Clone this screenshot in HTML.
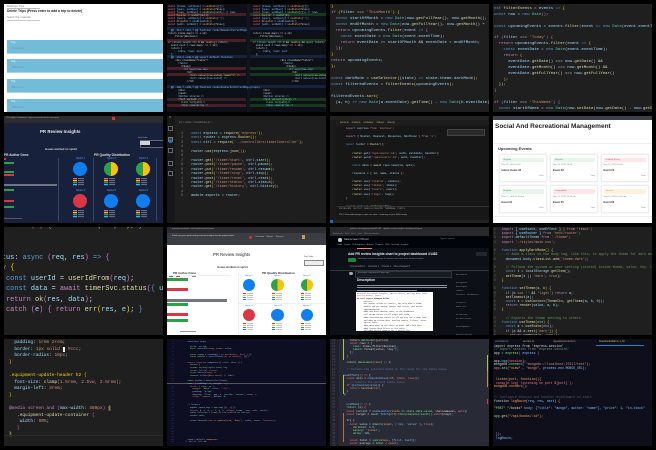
<!DOCTYPE html>
<html><head><meta charset="utf-8"><title>Screenshots</title>
<style>
html,body{margin:0;padding:0;background:#000;width:656px;height:450px;overflow:hidden}
.t{position:absolute;overflow:hidden;width:159px;height:108px}
.p{position:absolute;margin:0;white-space:pre;font-family:"Liberation Mono",monospace;filter:blur(.25px)}
.a{position:absolute}
.n{font-family:"Liberation Sans",sans-serif;white-space:nowrap;position:absolute}
i{font-style:normal}
.k{color:#c586c0}.b{color:#569cd6}.f{color:#dcdcaa}.v{color:#9cdcfe}.s{color:#ce9178}.y{color:#ffd700}.g{color:#6a9955}.w{color:#d4d4d4}.e{color:#4ec9b0}.m{color:#da70d6}.r{color:#f97583}.h{color:#7ee787}.l{color:#79c0ff}.o{color:#ffa657}
.pie{position:absolute;border-radius:50%}
</style></head><body>

<!-- r1c1 -->
<div class="t" style="left:4px;top:4px;background:#fff">
<div class="n" style="left:3px;top:1px;font-size:2.4px;color:#777">Bookings / Trips</div>
<div class="a" style="left:3px;top:4px;width:33px;height:.6px;background:#bbb"></div>
<div class="n" style="left:3px;top:5px;font-size:3.35px;font-weight:bold;color:#222">Delete Trips (Press enter to add a trip to delete)</div>
<div class="n" style="left:3px;top:12px;font-size:2.4px;color:#777">Search Trip / Calendar</div>
<div class="a" style="left:3px;top:15.5px;width:33px;height:.7px;background:#ccc"></div>
<div class="a" style="left:3px;top:36px;width:156px;height:13px;background:#72bcd9;border-bottom:1px solid #a9d5e6"><div class="n" style="left:4px;top:1px;font-size:2.6px;color:#fff">Trip</div><div class="n" style="left:5px;top:7px;font-size:2.6px;color:#7d8f98">Bike route</div></div>
<div class="a" style="left:3px;top:55px;width:156px;height:13px;background:#72bcd9;border-bottom:1px solid #a9d5e6"><div class="n" style="left:4px;top:1px;font-size:2.6px;color:#fff">Trip</div><div class="n" style="left:5px;top:7px;font-size:2.6px;color:#7d8f98">Bike route</div></div>
<div class="a" style="left:3px;top:75px;width:156px;height:13px;background:#72bcd9;border-bottom:1px solid #a9d5e6"><div class="n" style="left:4px;top:1px;font-size:2.6px;color:#fff">Trip</div><div class="n" style="left:5px;top:7px;font-size:2.6px;color:#7d8f98">Bike route</div></div>
<div class="a" style="left:3px;top:95px;width:156px;height:13px;background:#72bcd9"><div class="n" style="left:4px;top:1px;font-size:2.6px;color:#fff">Trip</div><div class="n" style="left:5px;top:7px;font-size:2.6px;color:#7d8f98">Bike route</div></div>
</div>

<!-- r1c2 diff -->
<div class="t" style="left:167px;top:4px;background:#0d1117">
<div class="a" style="left:0;top:9.2px;width:79px;height:3px;background:#4a1f24"></div><div class="a" style="left:83px;top:9.2px;width:76px;height:3px;background:#17381f"></div>
<div class="a" style="left:0;top:23px;width:159px;height:3px;background:#16233b"></div>
<div class="a" style="left:0;top:35.2px;width:79px;height:3px;background:#4a1f24"></div><div class="a" style="left:83px;top:35.2px;width:76px;height:3px;background:#17381f"></div>
<div class="a" style="left:0;top:51px;width:159px;height:3px;background:#16233b"></div>
<div class="a" style="left:0;top:62.8px;width:79px;height:3px;background:#4a1f24"></div><div class="a" style="left:83px;top:62.8px;width:76px;height:3px;background:#17381f"></div>
<div class="a" style="left:0;top:69.2px;width:79px;height:3px;background:#4a1f24"></div><div class="a" style="left:83px;top:69.2px;width:76px;height:3px;background:#17381f"></div>
<div class="a" style="left:0;top:80.5px;width:159px;height:3px;background:#16233b"></div>
<div class="a" style="left:0;top:93.5px;width:79px;height:3px;background:#3a2024"></div><div class="a" style="left:83px;top:93.5px;width:76px;height:3px;background:#17381f"></div>
<div class="a" style="left:0;top:99.5px;width:79px;height:3px;background:#4a1f24"></div><div class="a" style="left:83px;top:99.5px;width:76px;height:3px;background:#17381f"></div>
<div class="a" style="left:80px;top:0;width:3px;height:108px;background:#11161d"></div>
<pre class="p" style="left:1px;top:.5px;font-size:2.4px;line-height:3px;color:#c9d1d9"><i class="r">const</i> <i class="l">[items, setItems]</i> = <i class="o">useState</i>([]);
<i class="r">const</i> <i class="l">[open, setOpen]</i> = <i class="o">useState</i>(false);
<i class="r">const</i> <i class="l">[rows, setRows]</i> = <i class="h">useState</i>(null); <i class="l">// rows</i>
<i class="r">const</i> <i class="o">handler</i> = <i class="h">useRef</i>(null);
<i class="r">const</i> <i class="l">[query, setQuery]</i> = <i class="o">useState</i>('');
<i class="r">const</i> <i class="o">dispatch</i> = <i class="l">useDispatch</i>();
<i class="r">const</i> <i class="l">[edit, setEdit]</i> = <i class="o">useState</i>(false);

  <i class="l">@@ -112,7 +112,7 @@ function renderRowsForCurrentPage</i>
<i class="w">return items.map(i =&gt; i.id)</i>
<i class="w">    .filter(Boolean);</i>

<i class="r">if</i> (<i class="l">items.length</i> === 0 &amp;&amp; <i class="o">loading</i>) return;
  <i class="w">const next = rows.map(r =&gt; r.id);</i>
<i class="w">  return {</i>
<i class="l">    ...state, rows: next</i>
<i class="w">  };</i>
  <i class="l">@@ -140,9 +140,9 @@ export default function</i>
     <i class="w">&lt;div className="table"&gt;</i>
       <i class="l">&lt;Table&gt;</i>
         <i class="w">&lt;tbody&gt;</i>
           <i class="l">&lt;tr key={row.id}&gt;</i>
             <i class="w">&lt;td&gt;</i>
               <i class="h">&lt;Cell value={row.value} name="x" /&gt;</i>
               <i class="l">&lt;Cell value={row.total} /&gt;</i>
             <i class="w">&lt;/td&gt;</i>
  
  <i class="l">@@ -180,7 +180,7 @@ function renderFooterForCurrentPage(props)</i>
       <i class="w">&lt;div&gt;</i>
       <i class="w">&lt;span&gt;</i>
       <i class="l">&lt;Button size=sm /&gt;</i>
       <i class="w">&lt;Text variant /&gt;</i>
         <i class="h">&lt;Link to={path}/&gt;</i>
         <i class="l">&lt;Icon name=arrow /&gt;</i>
</pre>
<pre class="p" style="left:86px;top:.5px;font-size:2.4px;line-height:3px;color:#c9d1d9"><i class="r">const</i> <i class="l">[items, setItems]</i> = <i class="o">useState</i>([]);
<i class="r">const</i> <i class="l">[open, setOpen]</i> = <i class="o">useState</i>(false);
<i class="r">const</i> <i class="l">[rows, setRows]</i> = <i class="h">useState</i>([]); <i class="l">// rows</i>
<i class="r">const</i> <i class="o">handler</i> = <i class="h">useRef</i>(0);
<i class="r">const</i> <i class="l">[query, setQuery]</i> = <i class="o">useState</i>('');
<i class="r">const</i> <i class="o">dispatch</i> = <i class="l">useDispatch</i>();
<i class="r">const</i> <i class="l">[edit, setEdit]</i> = <i class="o">useState</i>(false);


<i class="w">return items.map(i =&gt; i.id)</i>
<i class="w">    .filter(Boolean);</i>

<i class="r">if</i> (<i class="l">items.length</i> === 0 &amp;&amp; <i class="o">loading</i> &amp;&amp; <i class="h">open</i>) return;
  <i class="w">const next = rows.map(r =&gt; r.id);</i>
<i class="w">  return {</i>
<i class="l">    ...state, rows: next</i>
<i class="w">  };</i>

                   <i class="w">&lt;div className="table"&gt;</i>
                     <i class="l">&lt;Table&gt;</i>
                       <i class="w">&lt;tbody&gt;</i>
                         <i class="l">&lt;tr key={row.id}&gt;</i>
                           <i class="w">&lt;td&gt;</i>
                             <i class="h">&lt;Cell value={row.value} name /&gt;</i>
                             <i class="l">&lt;Cell value={row.total} /&gt;</i>
                           <i class="w">&lt;/td&gt;</i>


       <i class="w">&lt;div&gt;</i>
       <i class="w">&lt;span&gt;</i>
       <i class="l">&lt;Button size=sm /&gt;</i>
       <i class="h">&lt;Text variant={kind} /&gt;</i>
         <i class="h">&lt;Link to={path}/&gt;</i>
         <i class="l">&lt;Icon name=arrow /&gt;</i>
</pre>
</div>

<!-- r1c3 -->
<div class="t" style="left:330px;top:4px;background:#1f1f1f">
<pre class="p" style="left:1px;top:-.3px;font-size:3.95px;line-height:6px;color:#d4d4d4"><i class="y">}</i>
<i class="k">if</i> <i class="y">(</i><i class="v">filter</i> === <i class="s">'ThisMonth'</i><i class="y">) {</i>
  <i class="b">const</i> <i class="v">startOfMonth</i> = <i class="b">new</i> <i class="e">Date</i><i class="m">(</i><i class="v">now</i>.<i class="f">getFullYear</i>(), <i class="v">now</i>.<i class="f">getMonth</i>(), 1);
  <i class="b">const</i> <i class="v">endOfMonth</i> = <i class="b">new</i> <i class="e">Date</i><i class="m">(</i><i class="v">now</i>.<i class="f">getFullYear</i>(), <i class="v">now</i>.<i class="f">getMonth</i>() +
  <i class="k">return</i> <i class="v">upcomingEvents</i>.<i class="f">filter</i><i class="m">(</i><i class="v">event</i> <i class="b">=&gt;</i> <i class="m">{</i>
    <i class="b">const</i> <i class="v">eventDate</i> = <i class="b">new</i> <i class="e">Date</i>(<i class="v">event</i>.<i class="v">eventTime</i>);
    <i class="k">return</i> <i class="v">eventDate</i> &gt;= <i class="v">startOfMonth</i> &amp;&amp; <i class="v">eventDate</i> &lt; <i class="v">endOfMonth</i>;
  <i class="m">}</i>);
<i class="y">}</i>
<i class="k">return</i> <i class="v">upcomingEvents</i>;
<i class="y">}</i>;

<i class="b">const</i> <i class="v">darkMode</i> = <i class="f">useSelector</i><i class="y">(</i>(<i class="v">state</i>) <i class="b">=&gt;</i> <i class="v">state</i>.<i class="v">theme</i>.<i class="v">darkMode</i><i class="y">)</i>;
<i class="b">const</i> <i class="v">filteredEvents</i> = <i class="f">filterEvents</i><i class="y">(</i><i class="v">upcomingEvents</i><i class="y">)</i>;

<i class="v">filteredEvents</i>.<i class="f">sort</i><i class="y">(</i>
  (<i class="v">a</i>, <i class="v">b</i>) <i class="b">=&gt;</i> <i class="b">new</i> <i class="e">Date</i>(<i class="v">a</i>.<i class="v">eventDate</i>).<i class="f">getTime</i>() - <i class="b">new</i> <i class="e">Date</i>(<i class="v">b</i>.<i class="v">eventDate</i>).<i class="f">ge</i>
</pre>
</div>

<!-- r1c4 -->
<div class="t" style="left:493px;top:4px;background:#1f1f1f">
<pre class="p" style="left:1px;top:3px;font-size:3.95px;line-height:5.87px;color:#d4d4d4"><i class="b">nst</i> <i class="f">filterEvents</i> = <i class="v">events</i> <i class="b">=&gt;</i> <i class="y">{</i>
<i class="b">const</i> <i class="v">now</i> = <i class="b">new</i> <i class="e">Date</i><i class="m">()</i>;

<i class="b">const</i> <i class="v">upcomingEvents</i> = <i class="v">events</i>.<i class="f">filter</i><i class="m">(</i><i class="v">event</i> <i class="b">=&gt;</i> <i class="b">new</i> <i class="e">Date</i>(<i class="v">event</i>.<i class="v">eventTi</i>

<i class="k">if</i> <i class="m">(</i><i class="v">filter</i> === <i class="s">'Today'</i><i class="m">) {</i>
  <i class="k">return</i> <i class="v">upcomingEvents</i>.<i class="f">filter</i>(<i class="v">event</i> <i class="b">=&gt;</i> <i class="y">{</i>
    <i class="b">const</i> <i class="v">eventDate</i> = <i class="b">new</i> <i class="e">Date</i>(<i class="v">event</i>.<i class="v">eventTime</i>);
    <i class="k">return</i> <i class="y">(</i>
      <i class="v">eventDate</i>.<i class="f">getDate</i>() === <i class="v">now</i>.<i class="f">getDate</i>() &amp;&amp;
      <i class="v">eventDate</i>.<i class="f">getMonth</i>() === <i class="v">now</i>.<i class="f">getMonth</i>() &amp;&amp;
      <i class="v">eventDate</i>.<i class="f">getFullYear</i>() === <i class="v">now</i>.<i class="f">getFullYear</i>()
    <i class="y">)</i>;
  <i class="y">}</i>);
<i class="m">}</i>

<i class="k">if</i> <i class="m">(</i><i class="v">filter</i> === <i class="s">'ThisWeek'</i><i class="m">) {</i>
  <i class="b">const</i> <i class="v">startOfWeek</i> = <i class="b">new</i> <i class="e">Date</i>(<i class="v">now</i>.<i class="f">setDate</i>(<i class="v">now</i>.<i class="f">getDate</i>() - <i class="v">now</i>.<i class="f">getDa</i>
  <i class="b">const</i> <i class="v">endOfWeek</i> = <i class="b">new</i> <i class="e">Date</i>(<i class="v">startOfWeek</i>);
</pre>
</div>

<!-- r2c1 dashboard dark -->
<div class="t" style="left:4px;top:116px;background:#17213b;height:107px">
<div class="a" style="left:0;top:0;width:159px;height:7px;background:#2c2c30"></div>
<div class="n" style="left:2px;top:.5px;font-size:2px;color:#aaa">PR Insights Dashboard - report overview from the last sprint</div>
<div class="a" style="left:108px;top:1px;width:3px;height:3px;background:#d33"></div>
<div class="n" style="left:36px;top:13px;font-size:4.4px;font-weight:bold;color:#e8e8e8">PR Review Insights</div>
<div class="n" style="left:134px;top:21px;font-size:2px;color:#bbb">Sort Order</div>
<div class="a" style="left:136px;top:24px;width:22px;height:6px;background:#111a30;border:.5px solid #667"></div>
<div class="a" style="left:136px;top:25px;width:10px;height:3.5px;background:#cfd3da"></div>
<div class="n" style="left:41px;top:31px;font-size:2.8px;font-weight:bold;color:#ddd">Issues worked on sprint</div>
<div class="n" style="left:0;top:37px;font-size:3.2px;font-weight:bold;color:#ddd">PR Author Done</div>
<div class="n" style="left:90px;top:37px;font-size:3.3px;font-weight:bold;color:#ddd">PR Quality Distribution</div>
<div class="a" style="left:54px;top:42px;width:.7px;height:63px;background:#3a4565"></div>
<div class="a" style="left:89px;top:42px;width:.7px;height:63px;background:#3a4565"></div>
<div class="a" style="left:152px;top:42px;width:.7px;height:63px;background:#3a4565"></div>
<div class="a" style="left:0;top:42px;width:2px;height:2px;background:#d33"></div>
<div class="a" style="left:0;top:45.8px;width:10px;height:2.4px;background:#2ba24a"></div>
<div class="a" style="left:0;top:54.8px;width:10px;height:2.4px;background:#2ba24a"></div>
<div class="a" style="left:0;top:57.5px;width:10px;height:2.4px;background:#dc3545"></div>
<div class="a" style="left:0;top:68px;width:53px;height:2.4px;background:#70757f"></div>
<div class="a" style="left:0;top:72.5px;width:10px;height:2.4px;background:#2ba24a"></div>
<div class="a" style="left:0;top:83.5px;width:10px;height:2.4px;background:#dc3545"></div>
<div class="a" style="left:0;top:89.8px;width:10px;height:2.4px;background:#2ba24a"></div>
<div class="a" style="left:0;top:102px;width:18px;height:1px;background:#556"></div>
<div class="n" style="left:72px;top:41px;font-size:2.6px;color:#5aa0ff">Sprint 1</div>
<div class="n" style="left:103px;top:41px;font-size:2.6px;color:#5aa0ff">Sprint 2</div>
<div class="n" style="left:135px;top:41px;font-size:2.6px;color:#5aa0ff">Sprint 3</div>
<div class="n" style="left:72px;top:73px;font-size:2.6px;color:#5aa0ff">Sprint 4</div>
<div class="n" style="left:103px;top:73px;font-size:2.6px;color:#5aa0ff">Sprint 5</div>
<div class="n" style="left:135px;top:73px;font-size:2.6px;color:#5aa0ff">Sprint 6</div>
<div class="pie" style="left:69px;top:46.3px;width:14px;height:14px;background:#0d7ff0"></div>
<div class="pie" style="left:100px;top:46.3px;width:14px;height:14px;background:linear-gradient(90deg,#2ba24a 50%,#ffc107 50%)"></div>
<div class="pie" style="left:132px;top:46.3px;width:14px;height:14px;background:linear-gradient(90deg,#2ba24a 50%,#ffc107 50%)"></div>
<div class="pie" style="left:69px;top:78.3px;width:14px;height:14px;background:#dc3545"></div>
<div class="pie" style="left:100px;top:78.3px;width:14px;height:14px;background:#0d7ff0"></div>
<div class="pie" style="left:132px;top:78.3px;width:14px;height:14px;background:#0d7ff0"></div>
<svg class="a" style="left:0;top:0" width="159" height="107">
<g id="lg"><rect x="69" y="62" width="4" height="1.3" fill="#e0697a"/><rect x="69" y="64" width="4" height="1.3" fill="#ffc107"/><rect x="69" y="66" width="4" height="1.3" fill="#2ba24a"/><rect x="69" y="68" width="4" height="1.3" fill="#5aa0ff"/><rect x="74" y="62.3" width="6" height=".8" fill="#889"/><rect x="74" y="64.3" width="6" height=".8" fill="#889"/><rect x="74" y="66.3" width="6" height=".8" fill="#889"/><rect x="74" y="68.3" width="6" height=".8" fill="#889"/></g>
<use href="#lg" x="31"/><use href="#lg" x="63"/><use href="#lg" y="32"/><use href="#lg" x="31" y="32"/><use href="#lg" x="63" y="32"/>
</svg>
</div>

<!-- r2c2 -->
<div class="t" style="left:167px;top:116px;background:#1e1e1e;height:107px">
<div class="a" style="left:0;top:0;width:8px;height:107px;background:#181818"></div>
<div class="a" style="left:1.5px;top:0;width:2.5px;height:2px;background:#444"></div>
<div class="a" style="left:1px;top:10px;width:2.5px;height:2.5px;border:.4px solid #666"></div>
<div class="a" style="left:1px;top:21px;width:2.5px;height:2.5px;background:#444;border:.4px solid #777"></div>
<div class="a" style="left:1.5px;top:24px;width:3px;height:3px;background:#0d6fd0"></div>
<div class="a" style="left:1px;top:32px;width:2.5px;height:2.5px;border:.4px solid #666"></div>
<div class="a" style="left:1px;top:45px;width:2.5px;height:2.5px;border:.4px solid #666"></div>
<div class="a" style="left:1px;top:55px;width:2.5px;height:2.5px;border:.4px solid #666"></div>
<div class="n" style="left:12px;top:5px;font-size:2.4px;color:#888">src &gt; routes &gt; timerRoutes.js &gt; ...</div>
<pre class="p" style="left:14px;top:16px;font-size:3.4px;line-height:4.46px;color:#d4d4d4"><i style="color:#858585">1</i>    <i class="b">const</i> <i class="v">express</i> = <i class="f">require</i><i class="y">(</i><i class="s">'express'</i><i class="y">)</i>;
<i style="color:#858585">2</i>    <i class="b">const</i> <i class="v">router</i> = <i class="v">express</i>.<i class="f">Router</i><i class="y">()</i>;
<i style="color:#858585">3</i>    <i class="b">const</i> <i class="v">ctrl</i> = <i class="f">require</i><i class="y">(</i><i class="s">'../controllers/timerController'</i><i class="y">)</i>;
<i style="color:#858585">4</i>
<i style="color:#858585">5</i>    <i class="v">router</i>.<i class="f">use</i><i class="y">(</i><i class="v">express</i>.<i class="f">json</i><i class="m">()</i><i class="y">)</i>;
<i style="color:#858585">6</i>
<i style="color:#858585">7</i>    <i class="v">router</i>.<i class="f">get</i><i class="y">(</i><i class="s">'/timer/start'</i>, <i class="v">ctrl</i>.<i class="v">start</i><i class="y">)</i>;
<i style="color:#858585">8</i>    <i class="v">router</i>.<i class="f">post</i><i class="y">(</i><i class="s">'/timer/pause'</i>, <i class="v">ctrl</i>.<i class="v">pause</i><i class="y">)</i>;
<i style="color:#858585">9</i>    <i class="v">router</i>.<i class="f">put</i><i class="y">(</i><i class="s">'/timer/resume'</i>, <i class="v">ctrl</i>.<i class="v">resume</i><i class="y">)</i>;
<i style="color:#858585">0</i>    <i class="v">router</i>.<i class="f">post</i><i class="y">(</i><i class="s">'/timer/stop'</i>, <i class="v">ctrl</i>.<i class="v">stop</i><i class="y">)</i>;
<i style="color:#858585">1</i>    <i class="v">router</i>.<i class="f">post</i><i class="y">(</i><i class="s">'/timer/reset'</i>, <i class="v">ctrl</i>.<i class="v">reset</i><i class="y">)</i>;
<i style="color:#858585">2</i>    <i class="v">router</i>.<i class="f">get</i><i class="y">(</i><i class="s">'/timer/status'</i>, <i class="v">ctrl</i>.<i class="v">status</i><i class="y">)</i>;
<i style="color:#858585">3</i>    <i class="v">router</i>.<i class="f">get</i><i class="y">(</i><i class="s">'/timer/history'</i>, <i class="v">ctrl</i>.<i class="v">history</i><i class="y">)</i>;
<i style="color:#858585">4</i>
<i style="color:#858585">5</i>    <i class="v">module</i>.<i class="v">exports</i> = <i class="v">router</i>;
</pre>
</div>

<!-- r2c3 -->
<div class="t" style="left:330px;top:116px;background:#171717;height:107px">
<div class="a" style="left:0;top:0;width:159px;height:4px;background:#222"></div>
<div class="a" style="left:0;top:4px;width:159px;height:6px;background:#1d1d1d"></div>
<div class="n" style="left:10px;top:5.5px;font-size:2.3px;color:#c9a96a">server.js &nbsp;&nbsp;&nbsp; routes.js &nbsp;&nbsp;&nbsp; models.js &nbsp;&nbsp;&nbsp; index.js &nbsp;&nbsp;&nbsp; timer.js</div>
<div class="a" style="left:0;top:4px;width:6px;height:103px;background:#1a1a1a"></div>
<div class="a" style="left:117px;top:13px;width:36px;height:5px;background:#2a2a2a;border:.5px solid #444"></div>
<pre class="p" style="left:9.5px;top:11px;font-size:2.7px;line-height:4.1px;color:#d4d4d4">
<i class="k">    import</i> <i class="v">express</i> <i class="k">from</i> <i class="s">'express'</i>;

<i class="k">    import</i> { <i class="v">Router, Request, Response, NextFunc</i> } <i class="k">from</i> <i class="s">'x'</i>;

<i class="b">    const</i> <i class="v">router</i> = <i class="f">Router</i>();

        <i class="f">router</i>.<i class="v">get</i>(<i class="s">'/api/users/:id'</i>, <i class="v">auth, validate, handler</i>);
        <i class="f">router</i>.<i class="v">post</i>(<i class="s">'/api/users/:id'</i>, <i class="v">auth, handler</i>);

        <i class="b">const</i> <i class="v">data</i> = <i class="f">await</i> <i class="v">repo.load(id, opts)</i>;

        <i class="v">response</i> = { <i class="v">id, name, status</i> };

        <i class="f">router</i>.<i class="v">use</i>(<i class="s">'/status'</i>, <i class="v">status</i>);
        <i class="f">router</i>.<i class="v">use</i>(<i class="s">'/items'</i>, <i class="v">items</i>);
        <i class="f">router</i>.<i class="v">use</i>(<i class="s">'/users'</i>, <i class="v">users</i>);
        <i class="f">router</i>.<i class="v">use</i>(<i class="s">'/logs'</i>, <i class="v">logs</i>);
    <i class="y">}</i>

    <i class="k">export</i> <i class="b">default</i> <i class="f">router</i>(<i class="v">path</i>);
</pre>
<div class="a" style="left:6px;top:90px;width:153px;height:.6px;background:#333"></div>
<div class="n" style="left:9px;top:92px;font-size:2.2px;color:#999">PROBLEMS &nbsp; OUTPUT &nbsp; DEBUG CONSOLE &nbsp; TERMINAL &nbsp; PORTS</div>
<div class="n" style="left:9px;top:98px;font-size:2.2px;color:#bbb">PS C:\Users\dev\project&gt; npm run start -- listening on port 3000 ready</div>
<div class="a" style="left:0;top:104px;width:159px;height:3px;background:#222"></div>
<div class="a" style="left:0;top:104px;width:3px;height:3px;background:#0d6fd0"></div>
</div>

<!-- r2c4 -->
<div class="t" style="left:493px;top:116px;background:#fff;height:107px">
<div class="a" style="left:0;top:0;width:159px;height:4px;background:#3c4147"></div>
<div class="n" style="left:2px;top:6.5px;font-size:6.5px;font-weight:bold;color:#222">Social And Recreational Management</div>
<div class="a" style="left:0;top:27px;width:159px;height:.6px;background:#eee"></div>
<div class="n" style="left:5px;top:30px;font-size:4px;font-weight:bold;color:#333">Upcoming Events</div>
<div class="a" style="left:0;top:100px;width:159px;height:.6px;background:#eee"></div>
<style>.cd{position:absolute;width:46px;height:26px;background:#fff;border:.5px solid #eee;box-shadow:0 0 1px #ddd}.pl{position:absolute;left:2px;top:3px;width:42px;height:4.5px;border-radius:1px;font:2.2px/4.5px "Liberation Sans",sans-serif;text-indent:2px}.d1{position:absolute;left:2px;top:9.5px;font:2.2px "Liberation Sans",sans-serif;color:#888;white-space:nowrap}.d2{position:absolute;left:2px;top:14.5px;font:bold 2.6px "Liberation Sans",sans-serif;color:#333;white-space:nowrap}.d3{position:absolute;right:2px;top:20.5px;font:2.1px "Liberation Sans",sans-serif;color:#888}</style>
<div class="cd" style="left:5.5px;top:37.5px"><div class="pl" style="background:#e6f6ea;color:#3a9d55">Regular</div><div class="d1">Nov 12, 2024 10:00</div><div class="d2">Indoor Game 02</div><div class="d3">View</div></div>
<div class="cd" style="left:57px;top:37.5px"><div class="pl" style="background:#e6f6ea;color:#3a9d55">Regular</div><div class="d1">Nov 14, 2024 10:00</div><div class="d2">Event 02</div><div class="d3">View</div></div>
<div class="cd" style="left:107.5px;top:37.5px"><div class="pl" style="background:#fde6e7;color:#d9505c">Outdoor Event</div><div class="d1">Nov 15, 2024 10:00</div><div class="d2">Event 03</div><div class="d3">View</div></div>
<div class="cd" style="left:5.5px;top:69px"><div class="pl" style="background:#e6f6ea;color:#3a9d55">Regular</div><div class="d1">Nov 17, 2024 11:30 am</div><div class="d2">Event 04</div><div class="d3">View</div></div>
<div class="cd" style="left:57px;top:69px"><div class="pl" style="background:#fde6e7;color:#d9505c">Competition</div><div class="d1">Nov 21, 2024 10:30 am</div><div class="d2">Event 05</div><div class="d3">View</div></div>
<div class="cd" style="left:107.5px;top:69px"><div class="pl" style="background:#fff2dc;color:#d99a2b">Seminar</div><div class="d1">Nov 23, 2024 10:30 am</div><div class="d2">Event 06</div><div class="d3">View</div></div>
</div>

<!-- r3c1 -->
<div class="t" style="left:4px;top:227px;background:#1f1f1f">
<pre class="p" style="left:-2.1px;top:-6px;font-size:6.9px;line-height:10.5px;color:#d4d4d4"> <i class="k">catch</i> <i class="m">(</i><i class="v">e</i><i class="m">)</i> <i class="m">{</i> <i class="k">return</i> <i class="f">err</i><i class="y">(</i><i class="v">res</i>, <i class="v">e</i><i class="y">)</i>; <i class="m">}</i>


<i class="v">tus</i>: <i class="b">async</i> <i class="m">(</i><i class="v">req</i>, <i class="v">res</i><i class="m">)</i> <i class="b">=&gt;</i> <i class="m">{</i>
<i class="k">y</i> <i class="y">{</i>
 <i class="b">const</i> <i class="v">userId</i> = <i class="f">userIdFrom</i><i class="m">(</i><i class="v">req</i><i class="m">)</i>;
 <i class="b">const</i> <i class="v">data</i> = <i class="k">await</i> <i class="f">timerSvc</i>.<i class="f">status</i><i class="m">(</i><i class="b">{</i> <i class="v">u</i>
 <i class="k">return</i> <i class="f">ok</i><i class="m">(</i><i class="v">res</i>, <i class="v">data</i><i class="m">)</i>;
 <i class="k">catch</i> <i class="m">(</i><i class="v">e</i><i class="m">)</i> <i class="m">{</i> <i class="k">return</i> <i class="f">err</i><i class="y">(</i><i class="v">res</i>, <i class="v">e</i><i class="y">)</i>; <i class="b">}</i>
</pre>
</div>

<!-- r3c2 -->
<div class="t" style="left:167px;top:227px;background:#fff">
<div class="a" style="left:0;top:0;width:159px;height:6px;background:#2c2c30"></div>
<div class="a" style="left:0;top:6px;width:159px;height:11.5px;background:#3a3d42"></div>
<div class="n" style="left:5px;top:1px;font-size:2.2px;color:#aaa">prreview.example.com/insights/sprint/report</div>
<div class="n" style="left:5px;top:8px;font-size:2.2px;color:#ddd">Finish up your sprint and get review insights for the project team</div>
<div class="a" style="left:82px;top:9px;width:3px;height:3px;background:#d33;border-radius:50%"></div>
<div class="n" style="left:88px;top:9px;font-size:2.2px;color:#bbb">Overview &nbsp;&nbsp; Sprints &nbsp;&nbsp; Reports</div>
<div class="a" style="left:135px;top:8px;width:3px;height:4px;background:#c9a040"></div>
<div class="n" style="left:46px;top:25px;font-size:4.3px;color:#222">PR Review Insights</div>
<div class="n" style="left:137px;top:29px;font-size:2px;color:#444">Sort Order</div>
<div class="a" style="left:137px;top:33px;width:18px;height:3.5px;background:#eee;border:.5px solid #888"></div>
<div class="n" style="left:50px;top:39px;font-size:2.7px;font-weight:bold;color:#333">Issues worked on sprint</div>
<div class="n" style="left:6px;top:43.5px;font-size:3px;font-weight:bold;color:#333">PR Author Done</div>
<div class="n" style="left:95px;top:43.5px;font-size:3px;font-weight:bold;color:#333">PR Quality Distribution</div>
<div class="a" style="left:0;top:47.5px;width:63px;height:.6px;background:#eee"></div>
<div class="a" style="left:2px;top:48.5px;width:4px;height:1.5px;background:#2ba24a"></div><div class="a" style="left:9px;top:48.5px;width:4px;height:1.5px;background:#dc3545"></div><div class="a" style="left:25px;top:48.5px;width:4px;height:1.5px;background:#888"></div>
<div class="a" style="left:0;top:51.2px;width:21px;height:3px;background:#2ba24a"></div>
<div class="a" style="left:0;top:60.8px;width:21px;height:3px;background:#dc3545"></div>
<div class="a" style="left:0;top:72px;width:60px;height:2.5px;background:#70757f"></div>
<div class="a" style="left:0;top:75.5px;width:21px;height:3px;background:#2ba24a"></div>
<div class="a" style="left:0;top:86.2px;width:21px;height:3px;background:#dc3545"></div>
<div class="a" style="left:0;top:92.2px;width:21px;height:3px;background:#2ba24a"></div>
<div class="a" style="left:13px;top:104px;width:16px;height:.8px;background:#999"></div>
<div class="a" style="left:71px;top:46px;width:.5px;height:62px;background:#eee"></div>
<div class="a" style="left:71px;top:76px;width:88px;height:.5px;background:#eee"></div>
<style>.sp{position:absolute;font:2.2px "Liberation Sans",sans-serif;color:#2a7de8}</style>
<div class="sp" style="left:78px;top:48px">Sprint 1</div><div class="sp" style="left:107px;top:48px">Sprint 2</div><div class="sp" style="left:136px;top:48px">Sprint 3</div>
<div class="sp" style="left:78px;top:78px">Sprint 4</div><div class="sp" style="left:107px;top:78px">Sprint 5</div><div class="sp" style="left:136px;top:78px">Sprint 6</div>
<div class="pie" style="left:75.7px;top:51.7px;width:12.5px;height:12.5px;background:#0d7ff0"></div>
<div class="pie" style="left:104.4px;top:51.7px;width:12.5px;height:12.5px;background:linear-gradient(90deg,#2ba24a 50%,#ffc107 50%)"></div>
<div class="pie" style="left:133.7px;top:51.7px;width:12.5px;height:12.5px;background:linear-gradient(90deg,#2ba24a 50%,#ffc107 50%)"></div>
<div class="pie" style="left:75.7px;top:81.7px;width:12.5px;height:12.5px;background:#dc3545"></div>
<div class="pie" style="left:104.4px;top:81.7px;width:12.5px;height:12.5px;background:#0d7ff0"></div>
<div class="pie" style="left:133.7px;top:81.7px;width:12.5px;height:12.5px;background:#0d7ff0"></div>
<svg class="a" style="left:0;top:0" width="159" height="108">
<g id="lh"><rect x="76" y="66" width="3" height="1" fill="#dc3545"/><rect x="76" y="68" width="3" height="1" fill="#ffc107"/><rect x="76" y="70" width="3" height="1" fill="#2ba24a"/><rect x="76" y="72" width="3" height="1" fill="#0d7ff0"/><rect x="80" y="66.2" width="6" height=".6" fill="#999"/><rect x="80" y="68.2" width="6" height=".6" fill="#999"/><rect x="80" y="70.2" width="6" height=".6" fill="#999"/><rect x="80" y="72.2" width="6" height=".6" fill="#999"/></g>
<use href="#lh" x="29"/><use href="#lh" x="58"/><use href="#lh" y="30"/><use href="#lh" x="29" y="30"/><use href="#lh" x="58" y="30"/>
</svg>
</div>

<!-- r3c3 github -->
<div class="t" style="left:330px;top:227px;background:#0d1117">
<div class="a" style="left:0;top:0;width:159px;height:9px;background:#26282b"></div>
<div class="n" style="left:20px;top:1px;font-size:2.2px;color:#aaa">github.com/org/project/pull/1482 · update review insights dashboard layout</div>
<div class="n" style="left:3px;top:5.5px;font-size:2px;color:#888">Bookmarks · Work · Docs · Tools · Other bookmarks</div>
<div class="a" style="left:0;top:9px;width:159px;height:12px;background:#010409"></div>
<div class="a" style="left:8px;top:11px;width:3.5px;height:3.5px;border-radius:50%;background:#ccc"></div>
<div class="n" style="left:14px;top:11px;font-size:2.4px;color:#ccc">balance-team / PR-tool</div>
<div class="n" style="left:110px;top:11px;font-size:2.2px;color:#888">Type to search</div>
<div class="n" style="left:7px;top:16.5px;font-size:2.2px;color:#aaa">Code &nbsp; Issues &nbsp; Pull requests &nbsp; Actions &nbsp; Projects &nbsp; Wiki &nbsp; Security &nbsp; Insights</div>
<div class="a" style="left:27px;top:20.5px;width:15px;height:.6px;background:#f78166"></div>
<div class="n" style="left:18px;top:25px;font-size:3.3px;font-weight:bold;color:#e6edf3">Add PR review insights chart to project dashboard #1482</div>
<div class="a" style="left:146px;top:25px;width:11px;height:4px;background:#21262d"></div>
<div class="a" style="left:18px;top:30.5px;width:8px;height:4px;background:#238636;border-radius:1px"></div>
<div class="n" style="left:28px;top:31px;font-size:2.2px;color:#8b949e">developer wants to merge 4 commits into main from feature/insights</div>
<div class="n" style="left:20px;top:38.5px;font-size:2.3px;color:#8b949e">Conversation 1 &nbsp;&nbsp; Commits 4 &nbsp;&nbsp; Checks 1 &nbsp;&nbsp; Files changed 8</div>
<div class="a" style="left:0;top:43px;width:159px;height:.5px;background:#30363d"></div>
<div class="a" style="left:19px;top:44.5px;width:3.5px;height:3.5px;border-radius:50%;background:#9aa"></div>
<div class="a" style="left:25px;top:44px;width:95px;height:5px;background:#161b22;border:.5px solid #30363d"></div>
<div class="n" style="left:28px;top:45px;font-size:2.1px;color:#8b949e">developer commented 2 days ago</div>
<div class="n" style="left:27px;top:51px;font-size:3.3px;font-weight:bold;color:#e6edf3">Description</div>
<div class="a" style="left:27px;top:57.5px;width:90px;height:.8px;background:#8b949e"></div>
<div class="a" style="left:27px;top:60px;width:90px;height:.8px;background:#8b949e"></div>
<div class="a" style="left:27px;top:62.5px;width:60px;height:.8px;background:#8b949e"></div>
<div class="a" style="left:26px;top:65px;width:77px;height:39px;background:#fff;overflow:hidden">
<pre class="p" style="left:1px;top:.5px;font-size:1.9px;line-height:2.7px;color:#222"><i style="color:#33c">Feature: PR review insights, Sprint charts, quality data links</i>
<i style="color:#c33">Quality Report  Notes</i>
<b>PR tool report changes below</b>
      Metrics
      Use author values in results, not only what's shown
      Weekly and per-sprint review rate charts, per author
      Implementation
      Adds new distribution chart to the dashboard
      Pull merge charts to all pages and links
      Adds distribution totals to all sprints for a team lead
      Includes PR review data, quality counts, filters, sorts
      Sprint links
      Adds more data to the chart on hover and click here
      Adds review data filter in the table
      Includes sprint reports for a single user
      Includes the sort order filter in table</pre></div>
<pre class="p" style="left:126px;top:46px;font-size:2.1px;line-height:4px;color:#8b949e">Reviewers
 
Assignees
developer
Labels
feature  dashboard
 
Projects
None yet
 
Milestone
No milestone
 
Development
 
Notifications</pre>
</div>

<!-- r3c4 -->
<div class="t" style="left:493px;top:227px;background:#1f1f1f">
<pre class="p" style="left:.7px;top:0;font-size:3.3px;line-height:4.23px;color:#d4d4d4"><i style="color:#666">1</i>   <i class="k">import</i> { <i class="v">useState, useEffect</i> } <i class="y">|</i> <i class="k">from</i> <i class="s">'react'</i>;
<i style="color:#666">2</i>   <i class="k">import</i> { <i class="v">useRouter</i> } <i class="k">from</i> <i class="s">'next/router'</i>;
<i style="color:#666">3</i>   <i class="k">import</i> <i class="v">defaultTheme</i> <i class="k">from</i> <i class="s">'./theme'</i>;
<i style="color:#666">4</i>   <i class="k">import</i> <i class="s">'./styles/main.css'</i>;

<i style="color:#666">6</i>   <i class="b">function</i> <i class="f">applyDarkMode</i><i class="y">()</i> {
<i style="color:#666">7</i>     <i class="g">// Adds a class to the body tag, like this, to apply the theme for dark mode</i>
<i style="color:#666">8</i>     <i class="v">document</i>.<i class="v">body</i>.<i class="f">classList</i>.<i class="f">add</i><i class="m">(</i><i class="s">'theme-dark'</i><i class="m">)</i>;

<i style="color:#666">0</i>     <i class="g">// Follows the system or user setting (stored) inside theme, value, key. Look</i>
<i style="color:#666">1</i>     <i class="b">const</i> <i class="v">t</i> = <i class="v">localStorage</i>.<i class="f">getItem</i>();
<i style="color:#666">2</i>     <i class="f">setTheme</i>(<i class="v">t</i> || <i class="s">'dark'</i>, <i class="s">true</i>);
<i style="color:#666">3</i>   <i class="y">}</i>

<i style="color:#666">5</i>   <i class="b">function</i> <i class="f">setTheme</i><i class="y">(</i><i class="v">a, b</i><i class="y">)</i> {
<i style="color:#666">6</i>     <i class="k">if</i> (<i class="v">b</i> === <i class="s">''</i> &amp;&amp; <i class="s">'light'</i>) <i class="k">return</i> <i class="v">a</i>;
<i style="color:#666">7</i>     <i class="f">setTimeout</i>(<i class="v">a</i>);
<i style="color:#666">8</i>     <i class="b">const</i> <i class="v">s</i> = <i class="f">useContext</i>(<i class="f">ThemeCtx</i>, <i class="f">getTheme</i>(<i class="v">a, b, 0</i>));
<i style="color:#666">9</i>     <i class="k">return</i> <i class="f">render</i>(<i class="v">value</i>, <i class="v">a, b</i>);
<i style="color:#666">0</i>   <i class="y">}</i>

<i style="color:#666">2</i>     <i class="g">// Exports the theme setting to others</i>
<i style="color:#666">3</i>   <i class="b">function</i> <i class="f">useTheme</i><i class="y">(</i><i class="v">ctx</i><i class="y">)</i> {
<i style="color:#666">4</i>     <i class="b">const</i> <i class="v">a</i> = <i class="f">useState</i>(<i class="v">ctx</i>);
<i style="color:#666">5</i>     <i class="k">if</i> (<i class="v">a</i> &amp;&amp; <i class="v">a</i>.<i class="f">test</i>(<i class="s">'dark'</i>)) <i class="y">{</i>
<i style="color:#666">6</i>       <i class="k">return</i> <i class="f">compute</i>(<i class="v">a</i>, <i class="s">'one'</i>);
</pre>
</div>

<!-- r4c1 -->
<div class="t" style="left:4px;top:339px;background:#1f1f1f;height:107px">
<pre class="p" style="left:5px;top:1px;font-size:4.47px;line-height:6.6px;color:#d4d4d4">  <i class="v">padding</i>: <i class="s">1rem 2rem</i>;
  <i class="v">border</i>: <i class="s">1px solid</i> <i style="background:#eee;color:#eee">#</i> <i class="s">#ccc</i>;
  <i class="v">border-radius</i>: <i class="s">10px</i>;
<i class="y">}</i>

<i class="y">.equipment-update-header h2</i> <i class="y">{</i>
  <i class="v">font-size</i>: <i class="f">clamp</i><i class="s">(1.5rem, 2.5vw, 2.5rem)</i>;
  <i class="v">margin-left</i>: <i class="s">3rem</i>;
<i class="y">}</i>

<i class="k">@media screen and</i> <i class="m">(</i><i class="v">max-width</i>: <i class="s">480px</i><i class="m">)</i> <i class="y" style="background:#444">{</i>
   <i class="f">.equipment-update-container</i> <i class="m">{</i>
    <i class="v">width</i>: <i class="s">90%</i>;
   <i class="m">}</i>
<i class="y" style="background:#333">}</i>
</pre>
<div class="a" style="left:0;top:96px;width:159px;height:.6px;background:#2c2c2c"></div>
</div>

<!-- r4c2 -->
<div class="t" style="left:167px;top:339px;background:#0e0e22;height:107px">
<div class="a" style="left:0;top:44px;width:159px;height:.7px;background:#555"></div>
<pre class="p" style="left:3px;top:1.5px;font-size:2.1px;line-height:2.65px;color:#aab"><i style="color:#445">  1</i>           <i class="l">interface Props</i>
<i style="color:#445">  2</i>
<i style="color:#445">  3</i>             <i class="h">title</i>: <i class="l">string</i>;
<i style="color:#445">  4</i>             <i class="h">data</i>: <i class="l">Record</i>&lt;<i class="o">string, Item</i>&gt;; <i class="l">value</i>;
<i style="color:#445">  5</i>
<i style="color:#445">  6</i>             <i class="h">const items</i> = <i class="l">useMemo</i>(() =&gt; <i class="r">build(data, key)</i>, []);
<i style="color:#445">  7</i>             <i class="h">const handle</i> = <i class="l">useCallback</i>(<i class="r">(e) =&gt; emit(e)</i>, [a]);
<i style="color:#445">  8</i>
<i style="color:#445">  9</i>           <i class="r">export function</i> <i class="l">Component</i>({ title, data }) {
<i style="color:#445"> 10</i>             <i class="w">return (</i>
<i style="color:#445"> 11</i>             <i class="h">&lt;View&gt; style={styles.root}</i> <i class="l">key</i>
<i style="color:#445"> 12</i>             <i class="o">&lt;Text&gt;</i> {title} <i class="r">&lt;/Text&gt;</i>
<i style="color:#445"> 13</i>             <i class="h">&lt;List</i> <i class="l">data</i>={<i class="r">items</i>} /&gt;
<i style="color:#445"> 14</i>             <i class="h">&lt;Footer</i> <i class="l">value</i>={<i class="o">data.total</i>} <i class="r">/&gt;</i> <i class="l">label</i>;
<i style="color:#445"> 15</i>
<i style="color:#445"> 16</i>           <i class="w">const styles</i> = <i class="l">makeStyles</i>(theme);
<i style="color:#445"> 17</i>           <i class="h">root</i>: { <i class="l">padding</i>: <i class="r">12</i>, margin: 4 };
<i style="color:#445"> 18</i>             <i class="r">title</i>: { size: 14 };
<i style="color:#445"> 19</i>               <i class="o">weight</i>: <i class="h">'bold'</i>, <i class="l">color</i>: <i class="r">'#fff'</i>;
<i style="color:#445"> 20</i>               <i class="l">padding</i>: <i class="h">'0 8px'</i>;
<i style="color:#445"> 21</i>               <i class="h">display</i>: <i class="l">'flex'</i>; <i class="o">gap</i>: 8, <i class="l">justify</i>: <i class="h">'center'</i>, wrap: <i class="r">1</i>;
<i style="color:#445"> 22</i>               <i class="r">align</i>: <i class="o">'center'</i>, <i class="l">border</i>: <i class="h">0</i>;
<i style="color:#445"> 23</i>
<i style="color:#445"> 24</i>
<i style="color:#445"> 25</i>           <i class="l">// helpers</i>
<i style="color:#445"> 26</i>             <i class="w">export const</i> <i class="l">map</i> = <i class="h">new Map</i>([<i class="o">[1, 2]</i>]);
<i style="color:#445"> 27</i>             <i class="r">keys</i>(<i class="h">a</i>, <i class="o">b</i>, <i class="l">c</i>, <i class="h">d</i>, <i class="r">e</i>, <i class="o">f</i>, <i class="l">g</i>, <i class="h">h</i>, <i class="l">values</i>, <i class="h">items</i>, <i class="r">rows</i>, <i class="o">cols</i>, <i class="l">total</i>);
<i style="color:#445"> 28</i>             <i class="h">const</i> <i class="l">filterFn</i> = <i class="o">(row) =&gt;</i> <i class="r">row.enabled</i> <i class="h">&amp;&amp;</i> <i class="l">row.id</i>;
<i style="color:#445"> 29</i>             <i class="w">return</i> <i class="h">rows</i>;
<i style="color:#445"> 30</i>
<i style="color:#445"> 31</i>             <i class="l">items</i>.<i class="h">forEach</i>(<i class="r">item</i> =&gt; <i class="o">update(item, 'done')</i>, <i class="l">cache</i>, <i class="h">store</i>, <i class="r">listeners</i>);
<i style="color:#445"> 32</i>
<i style="color:#445"> 33</i>
<i style="color:#445"> 34</i>
<i style="color:#445"> 35</i>
<i style="color:#445"> 36</i>
<i style="color:#445"> 37</i>
<i style="color:#445"> 38</i>           <i class="l">export default</i> <i class="o">Component</i>;
<i style="color:#445"> 39</i>         <i class="r">// end of file</i> <i class="h">ok</i>;
</pre>
</div>

<!-- r4c3 -->
<div class="t" style="left:330px;top:339px;background:#282a36;height:107px">
<div class="a" style="left:0;top:0;width:9px;height:107px;background:#21222c"></div>
<div class="a" style="left:13px;top:0;width:1px;height:21px;background:#a6c948"></div>
<div class="a" style="left:13px;top:36px;width:1px;height:19px;background:#a6c948"></div>
<div class="a" style="left:13px;top:74px;width:1px;height:29px;background:#b5703a"></div>
<div class="a" style="left:156.5px;top:16px;width:1.5px;height:16px;background:#a6c948"></div>
<div class="a" style="left:156.5px;top:32px;width:1.5px;height:16px;background:#c78a4a"></div>
<div class="a" style="left:156.5px;top:60px;width:1.5px;height:5px;background:#d35"></div>
<pre class="p" style="left:2px;top:-.5px;font-size:2.7px;line-height:3.23px;color:#e0e0e0"><i style="color:#556">10</i>         <i class="w">return</i> <i class="h">dateLabel</i>(<i class="o">period</i>)
<i style="color:#556">11</i>         <i class="r">const</i> <i class="w">rows</i> = [
<i style="color:#556">12</i>           <i class="h">rows</i>: <i class="w">items.filter(Boolean)</i>,
<i style="color:#556">13</i>           <i class="h">label</i>: <i class="w">format(value, 'day')</i>,
<i style="color:#556">14</i>         <i class="w">]</i>;
<i style="color:#556">15</i>       <i class="w">}</i>
<i style="color:#556">16</i>
<i style="color:#556">17</i>       <i class="w">return</i> <i class="h">dateLabel</i>(<i class="o">rows</i>) <i class="r">||</i> <i class="o">1</i>;
<i style="color:#556">18</i>
<i style="color:#556">19</i>       <i style="color:#6272a4">// Formats the selected dates in the range for the table below</i>
<i style="color:#556">20</i>
<i style="color:#556">21</i>     <i class="l">useEffect</i>(<i class="r">() =&gt;</i> {
<i style="color:#556">22</i>       <i class="r">const</i> <i class="h">data</i> = <i class="l">computeValue</i>(<i class="o">ref</i>, <i class="r">[date, rows]</i>);
<i style="color:#556">23</i>         <i style="color:#6272a4">// returns the current state value</i>
<i style="color:#556">24</i>       <i class="r">if</i> (<i class="l">isInvalid(value)</i>) {
<i style="color:#556">25</i>         <i class="r">return</i> <i class="o">handleError</i>;
<i style="color:#556">26</i>       <i class="w">}</i>
<i style="color:#556">27</i>     <i class="w">}</i>;
<i style="color:#556">28</i>
<i style="color:#556">29</i>
<i style="color:#556">30</i>       <i class="l">useMemo</i>(<i class="r">() =&gt;</i> {
<i style="color:#556">31</i>       <i class="h">return</i> (<i class="o">a</i>) {
<i style="color:#556">32</i>       <i class="r">const</i> <i class="w">current</i> = <i class="l">useSelector</i>(<i class="o">state</i> =&gt; <i class="h">state.data.value</i>, <i class="w">shallowEqual</i>, <i class="r">opts</i>);
<i style="color:#556">33</i>       <i class="r">const</i> <i class="w">target</i> = <i class="h">await</i> <i class="l">fetch</i>(<i class="o">url</i>).<i class="h">then(compute(result))</i>.<i class="r">catch</i>(<i class="w">noop</i>);
<i style="color:#556">34</i>
<i style="color:#556">35</i>       <i class="w">try</i> {
<i style="color:#556">36</i>         <i class="r">const</i> <i class="w">value</i> = <i class="h">doWork</i>(<i class="o">input</i>, <i class="l">{ key: 'value' }</i>, <i class="r">true</i>);
<i style="color:#556">37</i>           <i class="h">duration</i>: <i class="l">0.5</i>,
<i style="color:#556">38</i>           <i class="h">easing</i>: <i class="o">'linear'</i>,
<i style="color:#556">39</i>           <i class="h">delay</i>: <i class="l">100</i>,
<i style="color:#556">40</i>
<i style="color:#556">41</i>         <i class="r">const</i> <i class="w">total</i> = <i class="h">sum</i>(<i class="o">values</i>, <i class="l">[first, last]</i>);
<i style="color:#556">42</i>         <i class="r">const</i> <i class="w">average</i> = <i class="h">total</i> / <i class="o">count</i>;
<i style="color:#556">43</i>
<i style="color:#556">44</i>         <i style="color:#6272a4">// Compute results for the chart above</i>
<i style="color:#556">45</i>         <i class="r">const</i> <i class="w">result</i> = <i class="h">await</i> <i class="l">run</i>(<i class="o">total</i>);
</pre>
</div>

<!-- r4c4 -->
<div class="t" style="left:493px;top:339px;background:#0f0f1c;height:107px">
<div class="n" style="left:2px;top:.5px;font-size:2.6px;color:#8a8fa8">controller.ts</div>
<div class="n" style="left:30px;top:.5px;font-size:2.6px;color:#c9a96a">service.ts</div>
<div class="n" style="left:60px;top:.5px;font-size:2.6px;color:#c9a96a">repository/events.ts</div>
<div class="n" style="left:106px;top:.5px;font-size:2.6px;color:#e0c070">timerController.ts 1, M</div>
<div class="a" style="left:103px;top:5.5px;width:48px;height:.8px;background:#1b82c8"></div>
<pre class="p" style="left:1px;top:5.8px;font-size:3.15px;line-height:3.68px;color:#d4d4d4"><i class="w">import express from 'express-session'</i>
<i class="g">// import session from 'express-session'</i>
<i class="w">app =</i> <i class="h">express</i><i class="r">(</i> <i class="l">express</i> <i class="r">)</i>

<i class="w">app</i>.<i class="l">use</i>(<i class="r">session</i>);
<i class="w">mongoDB</i>.<i class="h">connect</i>( <i class="s">"mongodb://localhost:27017/test"</i>);
<i class="r">app</i>.<i class="h">set</i>(<i class="o">"view"</i> , <i class="s">"mongo"</i>, <i class="l">process.env.MONGO_URL</i>);


<i class="o">&nbsp;listen(port, function(){</i>
<i class="r">&nbsp;console.log(&#96;listening on port ${port}&#96;);</i>
<i class="o">mongoDB.connect();</i>


<i style="color:#556">// Configure session and handler middleware on start</i>
<i class="w">function</i> <i class="o">logRoute</i>(<i class="l">req, res, next</i>) {

<i class="h">"POST"</i> <i class="f">"/books"</i> <i class="l">body: {"title": "mongo", author: "name"}, "price": 1, "in-stock"</i>

<i class="h">app</i>.<i class="f">get</i><i class="o">("/api/books/:id")</i>;




<i class="l">&nbsp;});</i>
<i class="l">&nbsp;logRoute;</i>
</pre>
</div>

</body></html>
